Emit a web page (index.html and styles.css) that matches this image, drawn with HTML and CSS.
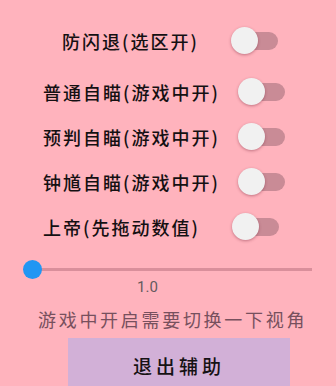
FILE: index.html
```html
<!DOCTYPE html>
<html lang="zh">
<head>
<meta charset="utf-8">
<link rel="stylesheet" href="styles.css">
</head>
<body>
<main class="panel">
  <div class="row row-first">
    <span class="label label-first">防闪退(选区开)</span>
    <span class="switch"></span>
  </div>
  <div class="row">
    <span class="label label-wide">普通自瞄(游戏中开)</span>
    <span class="switch"></span>
  </div>
  <div class="row">
    <span class="label label-wide">预判自瞄(游戏中开)</span>
    <span class="switch"></span>
  </div>
  <div class="row">
    <span class="label label-wide">钟馗自瞄(游戏中开)</span>
    <span class="switch"></span>
  </div>
  <div class="row">
    <span class="label label-god">上帝(先拖动数值)</span>
    <span class="switch"></span>
  </div>
  <div class="slider">
    <div class="slider-track"><span class="slider-thumb"></span></div>
  </div>
  <div class="value">1.0</div>
  <div class="hint">游戏中开启需要切换一下视角</div>
  <div class="button">退出辅助</div>
</main>
</body>
</html>
```
FILE: styles.css
```css
html, body {
  margin: 0;
  padding: 0;
  background: #ffb3bd;
  overflow: hidden;
}
body {
  width: 336px;
  height: 386px;
  font-family: "Noto Sans CJK SC", "Noto Sans", sans-serif;
}
.panel {
  display: flex;
  flex-direction: column;
  padding-top: 19px;
}
.row {
  display: flex;
  align-items: center;
  height: 45px;
  padding-left: 43px;
}
.row-first {
  height: 44px;
  margin-bottom: 6px;
  padding-left: 62px;
}
.label {
  font-size: 18px;
  font-weight: 500;
  letter-spacing: 2px;
  color: #141012;
  white-space: nowrap;
}
.label-first { width: 169px; }
.label-wide { width: 195px; }
.label-god { width: 189px; }
.switch {
  position: relative;
  width: 44px;
  height: 18px;
  margin-left: 3px;
  border-radius: 9px;
  background: #c98b96;
}
.switch::before {
  content: "";
  position: absolute;
  left: -3px;
  top: -5px;
  width: 27px;
  height: 27px;
  border-radius: 50%;
  background: #f1f1f1;
  box-shadow: 0 1px 3px rgba(120, 40, 60, 0.45);
}
.slider {
  display: flex;
  align-items: center;
  height: 20px;
  margin-top: 10px;
  padding-left: 32px;
  padding-right: 24px;
}
.slider-track {
  position: relative;
  flex: 1;
  height: 3px;
  background: #d98f9b;
}
.slider-thumb {
  position: absolute;
  left: -9px;
  top: -8px;
  width: 19px;
  height: 19px;
  border-radius: 50%;
  background: #2196f3;
}
.value {
  height: 18px;
  line-height: 18px;
  margin-top: -1px;
  padding-left: 137px;
  font-family: Roboto, "Noto Sans", sans-serif;
  font-weight: 400;
  font-size: 15px;
  color: #655a5e;
}
.hint {
  height: 24px;
  line-height: 24px;
  margin-top: 11px;
  padding-left: 38px;
  font-size: 18px;
  letter-spacing: 2.7px;
  color: #77505d;
  white-space: nowrap;
}
.button {
  display: flex;
  align-items: center;
  justify-content: center;
  width: 222px;
  height: 54px;
  margin-top: 7px;
  margin-left: 68px;
  background: #d2b0d7;
  font-size: 19px;
  font-weight: 500;
  letter-spacing: 4px;
  color: #161214;
}
```
